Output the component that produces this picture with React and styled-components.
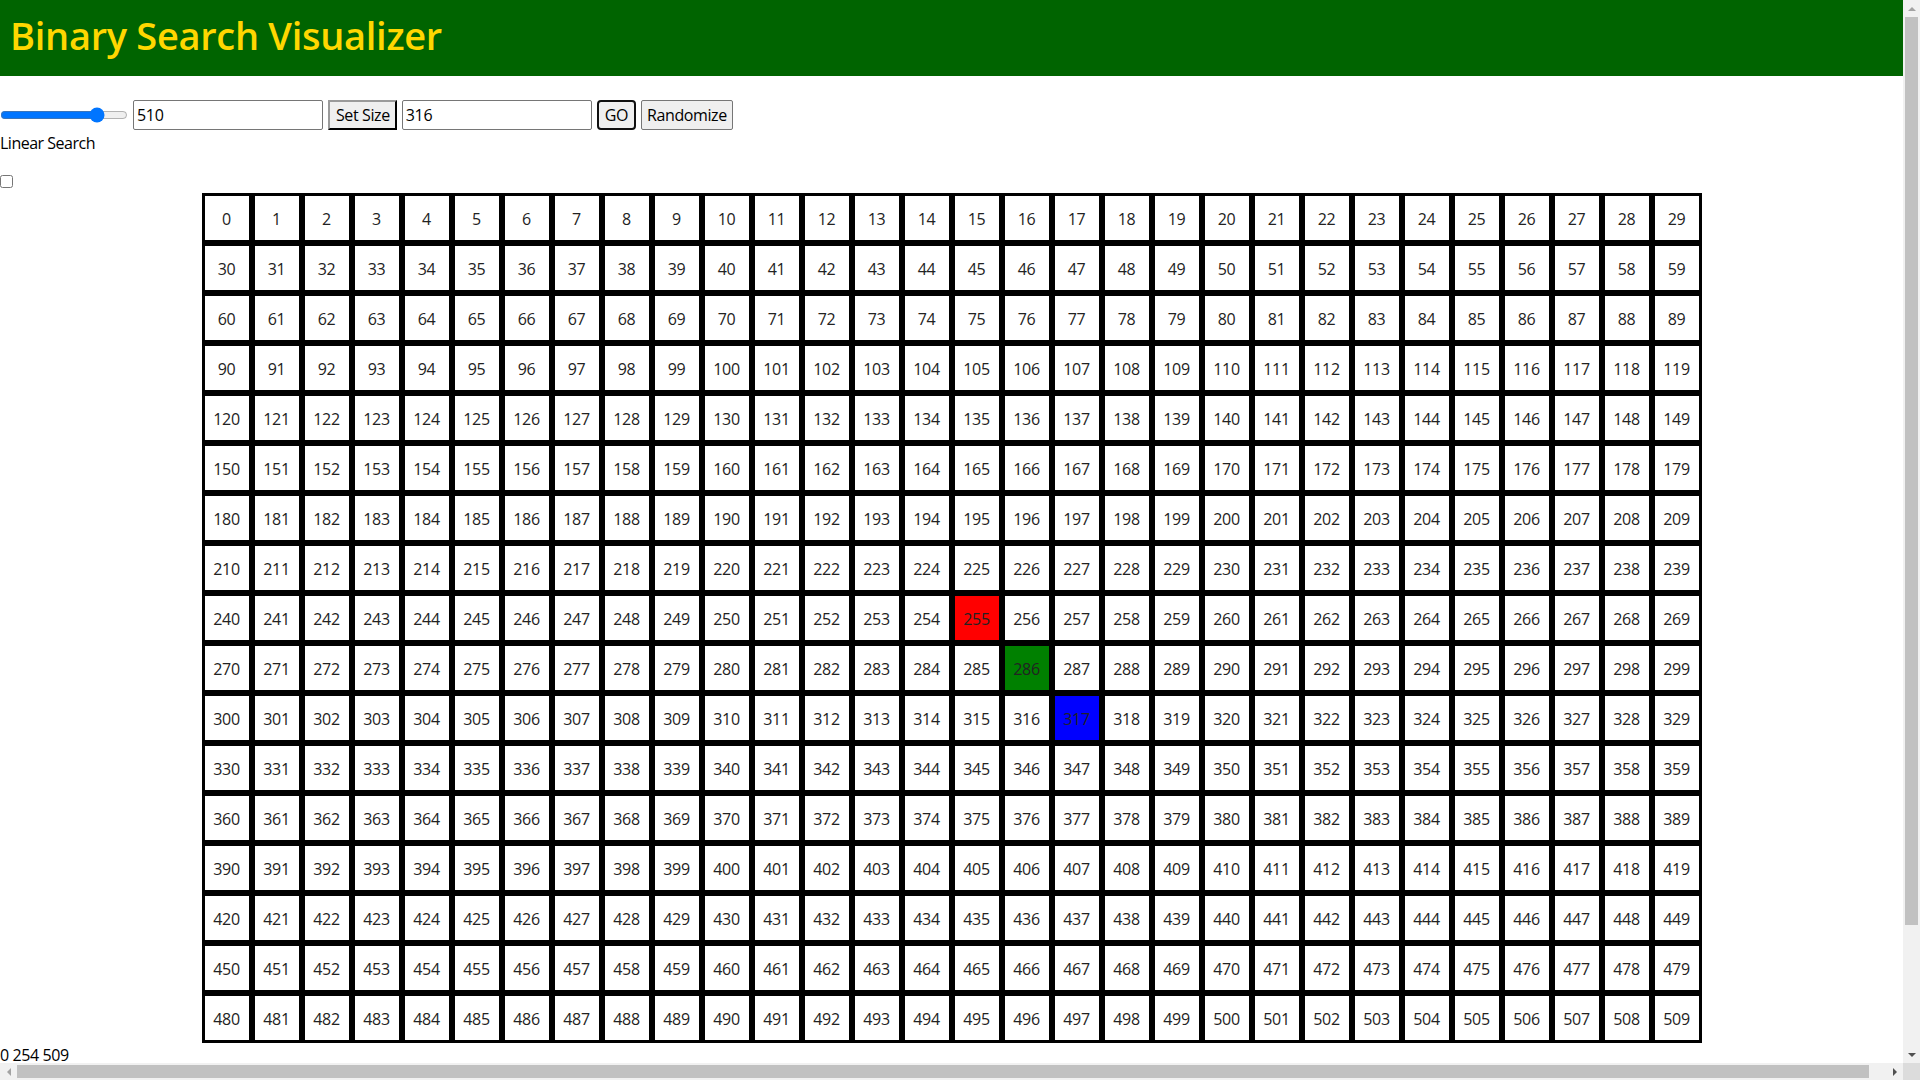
import React, { useState } from "react"
import styled, { createGlobalStyle } from "styled-components"

const GlobalStyle = createGlobalStyle`
body {
  margin: 0;
  font-family: "Segoe UI", "Open Sans", "Noto Sans", sans-serif;
  font-size: 16px;
  color: #000;
}
`

const SIZE = 510
const LOW = 255
const MID = 286
const HIGH = 317

export default function App() {
    const [size, setSize] = useState(510)
    const [target, setTarget] = useState(316)
    const cells = Array.from({ length: SIZE }, (_, i) => i)

    const colorFor = (i) => {
        if (i === LOW) return "#ff0000"
        if (i === MID) return "#008000"
        if (i === HIGH) return "#0000ff"
        return "#ffffff"
    }

    return (
        <Page>
            <GlobalStyle />
            <Header>
                <Title>Binary Search Visualizer</Title>
            </Header>
            <Controls>
                <Slider type="range" min="0" max="640" defaultValue="510" />
                <TextInput value={size} onChange={(e) => setSize(e.target.value)} />
                <OutsetButton>Set Size</OutsetButton>
                <TextInput value={target} onChange={(e) => setTarget(e.target.value)} />
                <GoButton>GO</GoButton>
                <Button>Randomize</Button>
            </Controls>
            <Label>Linear Search</Label>
            <Check type="checkbox" />
            <Grid>
                {cells.map((i) => (
                    <Cell key={i} $bg={colorFor(i)}>{i}</Cell>
                ))}
            </Grid>
            <Status>0 254 509</Status>

            {/* browser scrollbars, drawn over the page */}
            <VBar>
                <Arrow $dir="up" $dim />
                <VThumb />
                <Arrow $dir="down" />
            </VBar>
            <HBar>
                <Arrow $dir="left" $dim />
                <HThumb />
                <Arrow $dir="right" />
            </HBar>
            <Corner />
        </Page>
    )
}

const Page = styled.div`
width: calc(100vw - 17px);
padding-bottom: 140px;
`

const Header = styled.div`
width: 100vw;
height: 76px;
background: #006400;
display: flex;
align-items: center;
`

const Title = styled.h1`
margin: 0 0 7px 10px;
color: #ffd700;
font-size: 38px;
font-weight: 600;
letter-spacing: -0.3px;
`

const Controls = styled.div`
display: flex;
align-items: center;
gap: 5px;
margin-top: 24px;
height: 30px;
`

const Slider = styled.input`
width: 128px;
margin: 0;
accent-color: #0075ff;
`

const TextInput = styled.input`
box-sizing: border-box;
width: 190px;
height: 30px;
padding: 1px 3px;
border: 1px solid #767676;
border-radius: 2px;
font-family: inherit;
font-size: 16px;
letter-spacing: -0.3px;
outline: none;
`

const Button = styled.button`
box-sizing: border-box;
height: 30px;
padding: 0 5px;
font-family: inherit;
font-size: 16px;
letter-spacing: -0.4px;
background: #efefef;
border: 1px solid #767676;
border-radius: 2px;
color: #000;
`

const OutsetButton = styled(Button)`
border: 2px outset #9a9a9a;
border-right-color: #333;
border-bottom-color: #333;
border-radius: 0;
padding: 0 5px 0 6px;
`

const GoButton = styled(Button)`
border: 2px solid #101010;
border-radius: 4px;
padding: 0 6px;
`

const Label = styled.div`
margin-top: 2px;
line-height: 22px;
letter-spacing: -0.5px;
`

const Check = styled.input`
display: block;
width: 13px;
height: 13px;
margin: 21px 0 5px 0;
`

const Grid = styled.div`
width: 1500px;
margin: 0 auto;
display: flex;
flex-wrap: wrap;
`

const Cell = styled.div`
box-sizing: border-box;
width: 50px;
height: 50px;
padding-top: 2px;
border: 3px solid #000;
background: ${(p) => p.$bg};
display: flex;
align-items: center;
justify-content: center;
font-size: 16px;
letter-spacing: -0.3px;
color: #222;
`

const Status = styled.div`
margin-top: 1px;
line-height: 22px;
letter-spacing: -0.4px;
`

const VBar = styled.div`
position: fixed;
top: 0;
right: 0;
width: 17px;
height: calc(100vh - 17px);
background: #f1f1f1;
display: flex;
flex-direction: column;
align-items: center;
`

const HBar = styled.div`
position: fixed;
left: 0;
bottom: 0;
width: calc(100vw - 17px);
height: 17px;
background: #f1f1f1;
display: flex;
align-items: center;
`

const Corner = styled.div`
position: fixed;
right: 0;
bottom: 0;
width: 17px;
height: 17px;
background: #dcdcdc;
`

const VThumb = styled.div`
width: 13px;
height: 908px;
background: #c1c1c1;
`

const HThumb = styled.div`
height: 13px;
flex: 1;
margin-right: 17px;
background: #c1c1c1;
`

const arrowBorders = {
    up: (c) => `border-width: 0 4px 4px 4px; border-color: transparent transparent ${c} transparent;`,
    down: (c) => `border-width: 4px 4px 0 4px; border-color: ${c} transparent transparent transparent;`,
    left: (c) => `border-width: 4px 4px 4px 0; border-color: transparent ${c} transparent transparent;`,
    right: (c) => `border-width: 4px 0 4px 4px; border-color: transparent transparent transparent ${c};`,
}

const Arrow = styled.div`
width: 17px;
height: 17px;
flex-shrink: 0;
display: flex;
align-items: center;
justify-content: center;
margin-top: ${(p) => (p.$dir === "down" ? "auto" : "0")};
&::before {
  content: "";
  width: 0;
  height: 0;
  border-style: solid;
  ${(p) => arrowBorders[p.$dir](p.$dim ? "#a3a3a3" : "#505050")}
}
`
